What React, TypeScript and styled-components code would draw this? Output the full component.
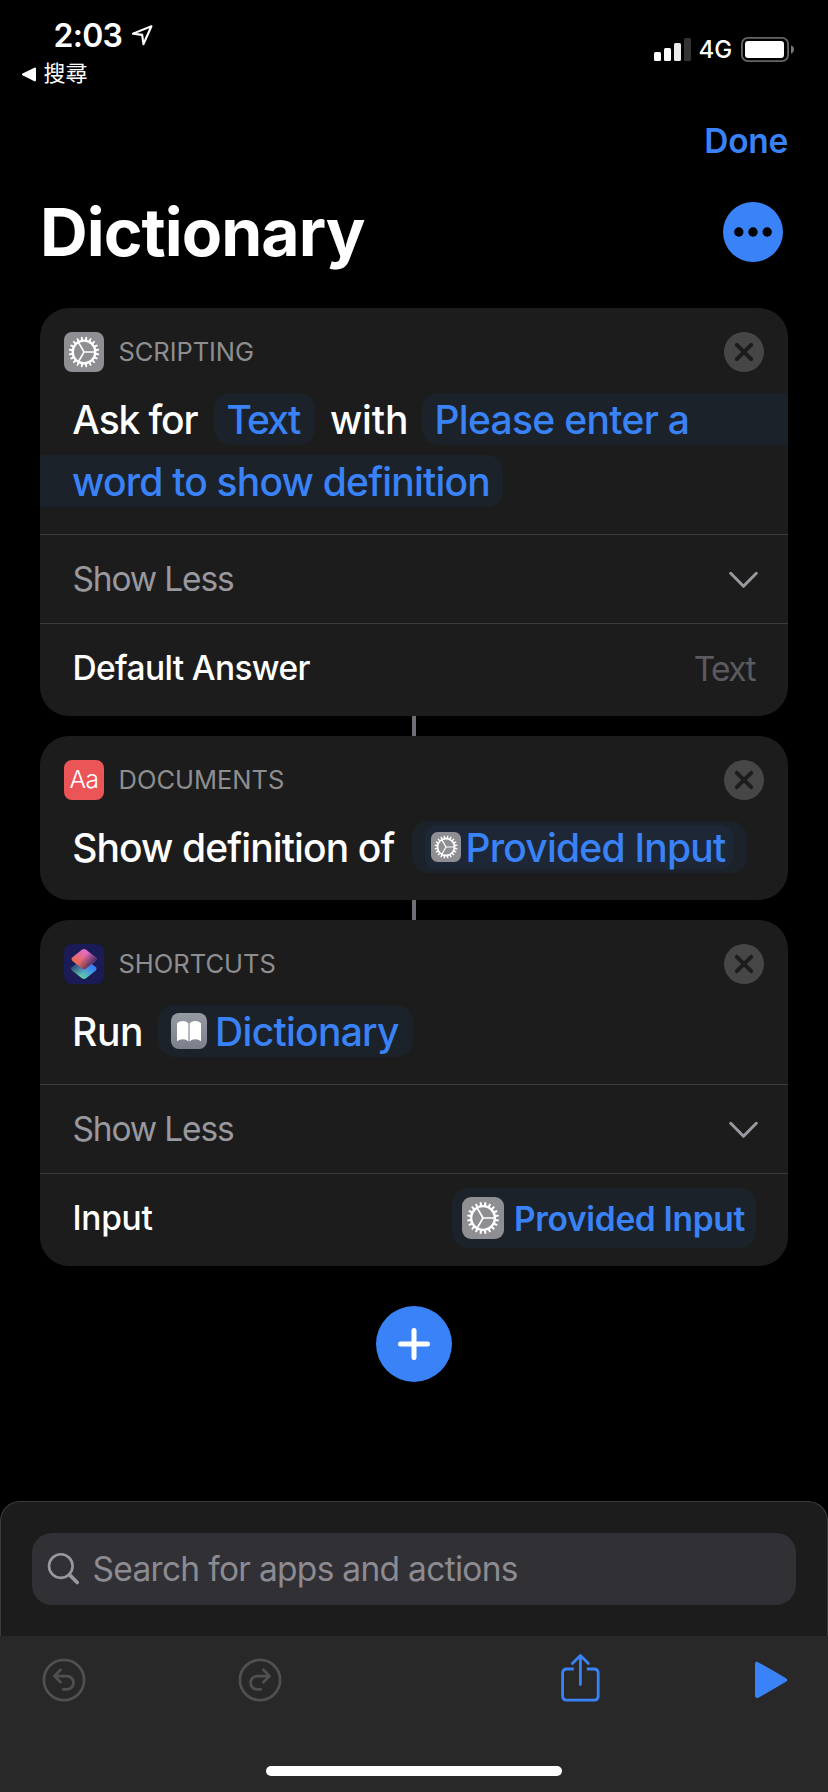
import React from "react";
import styled, { createGlobalStyle } from "styled-components";

const GlobalStyle = createGlobalStyle`
  *, *::before, *::after { box-sizing: border-box; }
  body { margin: 0; background: #000; }
  svg { display: block; flex: none; }
`;

const blue = "#3a82f7";
const gray = "#98989f";

const Screen = styled.div`
  width: 828px;
  height: 1792px;
  display: flex;
  flex-direction: column;
  overflow: hidden;
  background: #000;
  color: #fff;
  font-family: Inter, "Noto Sans CJK TC", sans-serif;
`;

interface TextProps {
  $size?: number;
  $weight?: number;
  $tracking?: number;
  $color?: string;
  $before?: number;
  $after?: number;
  $drop?: number;
}

const Label = styled.span<TextProps>`
  flex: none;
  white-space: pre;
  line-height: 1.2;
  font-size: ${(p) => p.$size ?? 39}px;
  font-weight: ${(p) => p.$weight ?? 500};
  letter-spacing: ${(p) => p.$tracking ?? 0}px;
  color: ${(p) => p.$color ?? "inherit"};
  margin-left: ${(p) => p.$before ?? 0}px;
  margin-right: ${(p) => p.$after ?? 0}px;
  padding-top: ${(p) => (p.$drop ?? 0) * 2}px;
`;

/* Status bar */

const StatusBar = styled.header`
  height: 96px;
  flex: none;
  display: flex;
  justify-content: space-between;
`;

const StatusLeft = styled.div`
  display: flex;
  flex-direction: column;
`;

const TimeRow = styled.div`
  height: 47px;
  margin-top: 12px;
  padding-left: 53.5px;
  display: flex;
  align-items: center;
  gap: 8.5px;
`;

const BackRow = styled.div`
  height: 30px;
  padding-left: 22px;
  display: flex;
  align-items: center;
  gap: 7.5px;
`;

const BackLabel = styled.span`
  font-size: 22px;
  font-weight: 400;
  line-height: 30px;
  padding-bottom: 3px;
`;

const StatusRight = styled.div`
  height: 99px;
  padding-right: 34px;
  display: flex;
  align-items: center;
`;

/* Navigation */

const NavBar = styled.nav`
  height: 88px;
  flex: none;
  padding-right: 40px;
  display: flex;
  align-items: center;
  justify-content: flex-end;
`;

const TitleRow = styled.div`
  height: 60px;
  margin: 18px 45px 46px 40px;
  flex: none;
  display: flex;
  align-items: center;
  justify-content: space-between;
`;

const Title = styled.h1`
  margin: 0;
  padding-top: 2px;
  font-size: 66px;
  font-weight: 700;
  line-height: 1.2;
  letter-spacing: -0.95px;
`;

const RoundButton = styled.button<{ $size: number; $bg: string }>`
  width: ${(p) => p.$size}px;
  height: ${(p) => p.$size}px;
  flex: none;
  padding: 0;
  border: 0;
  border-radius: 50%;
  background: ${(p) => p.$bg};
  display: flex;
  align-items: center;
  justify-content: center;
`;

/* Action cards */

const Flow = styled.main`
  display: flex;
  flex-direction: column;
  align-items: center;
`;

const Card = styled.section`
  width: 748px;
  border-radius: 29px;
  background: #1c1c1c;
  overflow: hidden;
`;

const Connector = styled.div`
  width: 4px;
  height: 20px;
  background: #6e7077;
`;

const CardHeader = styled.div`
  height: 40px;
  margin: 24px 24px 21px;
  display: flex;
  align-items: center;
  gap: 14.5px;
`;

const AppTile = styled.span<{ $size: number; $radius: number; $bg: string }>`
  width: ${(p) => p.$size}px;
  height: ${(p) => p.$size}px;
  flex: none;
  border-radius: ${(p) => p.$radius}px;
  background: ${(p) => p.$bg};
  display: flex;
  align-items: center;
  justify-content: center;
  overflow: hidden;
`;

const Category = styled.span<{ $tracking: number }>`
  flex: 1;
  font-size: 25.5px;
  line-height: 1;
  letter-spacing: ${(p) => p.$tracking}px;
  color: #8e8e90;
`;

const Sentence = styled.div`
  display: flex;
  flex-direction: column;
  gap: 10px;
  margin-bottom: 27px;
`;

const SentenceLine = styled.div<{ $inset?: number }>`
  height: 52px;
  padding-left: ${(p) => p.$inset ?? 0}px;
  display: flex;
  align-items: center;
`;

const Pill = styled.span<{ $pad: string; $after?: number; $open?: "left" | "right"; $height?: number }>`
  height: ${(p) => p.$height ?? 52}px;
  flex: ${(p) => (p.$open === "right" ? "1 0 auto" : "none")};
  padding: ${(p) => p.$pad};
  margin-right: ${(p) => p.$after ?? 0}px;
  border-radius: ${(p) => (p.$open === "left" ? "0 16px 16px 0" : p.$open === "right" ? "16px 0 0 16px" : "16px")};
  background: #1c2229;
  color: ${blue};
  display: flex;
  align-items: center;
`;

const Variable = styled.span`
  height: 44px;
  padding: 0 7.4px 0 6px;
  border-radius: 12px;
  background: #1e2735;
  display: flex;
  align-items: center;
`;

const Row = styled.div<{ $height: number; $right: number; $lift?: number }>`
  height: ${(p) => p.$height}px;
  padding: 0 ${(p) => p.$right}px ${(p) => p.$lift ?? 0}px 32.5px;
  border-top: 1px solid #3b3b3c;
  display: flex;
  align-items: center;
  justify-content: space-between;
`;

const AddRow = styled.div`
  margin-top: 40px;
  display: flex;
  justify-content: center;
`;

/* Bottom sheet */

const Sheet = styled.section`
  height: 135px;
  margin-top: auto;
  flex: none;
  padding: 31px 31px 0;
  border: 1px solid #3c3c3d;
  border-bottom: 0;
  border-radius: 20px 20px 0 0;
  background: #1c1c1c;
`;

const SearchField = styled.div`
  height: 72px;
  padding-left: 15px;
  border-radius: 20px;
  background: #313035;
  display: flex;
  align-items: center;
`;

const Toolbar = styled.footer`
  height: 156px;
  flex: none;
  background: #282828;
  display: flex;
  flex-direction: column;
  align-items: center;
`;

const ToolbarItems = styled.div`
  width: 100%;
  height: 88px;
  padding: 0 40px 0 42px;
  display: flex;
  align-items: center;
`;

const Spacer = styled.span<{ $grow: number }>`
  flex: ${(p) => p.$grow} 0 0;
`;

const HomeIndicator = styled.div`
  width: 296px;
  height: 10px;
  margin-top: 42px;
  border-radius: 5px;
  background: #fff;
`;

/* Icons */

const TEETH = Array.from({ length: 20 }, (_, i) => i * 18 + 9);

const Gear = ({ size }: { size: number }) => (
  <svg width={size} height={size} viewBox="-20 -20 40 40" stroke="#fff" fill="none">
    <circle r="11.3" strokeWidth="2.3" />
    {TEETH.map((a) => (
      <path key={a} d="M11.8 -1.15 15.2 -.8V.8L11.8 1.15Z" fill="#fff" stroke="none" transform={`rotate(${a})`} />
    ))}
    {[0, 120, 240].map((a) => (
      <path key={a} d="M0 0H11" strokeWidth="1.6" transform={`rotate(${a})`} />
    ))}
  </svg>
);

const ScriptingTile = ({ size, radius }: { size: number; radius: number }) => (
  <AppTile $size={size} $radius={radius} $bg="#8e8e93">
    <Gear size={size} />
  </AppTile>
);

const DocumentsTile = () => (
  <AppTile $size={40} $radius={8} $bg="#eb5558">
    <Label $size={24.5} $weight={300} $tracking={-0.6}>Aa</Label>
  </AppTile>
);

const ShortcutsTile = () => (
  <AppTile $size={40} $radius={8} $bg="#1b1b56">
    <svg width="40" height="40" viewBox="0 0 40 40">
      <defs>
        <linearGradient id="top" x1="0.6" y1="0.1" x2="0.25" y2="0.6">
          <stop offset="0" stopColor="#e46ccf" />
          <stop offset="1" stopColor="#ea6a5c" />
        </linearGradient>
        <linearGradient id="topFade" x1="0.5" y1="0.35" x2="0.92" y2="0.62">
          <stop offset="0" stopColor="#3f2b66" stopOpacity="0" />
          <stop offset="1" stopColor="#3f2b66" stopOpacity="0.95" />
        </linearGradient>
        <linearGradient id="bottom" x1="0.4" y1="0.95" x2="0.8" y2="0.45">
          <stop offset="0" stopColor="#66cfa0" />
          <stop offset="1" stopColor="#3a83f5" />
        </linearGradient>
        <linearGradient id="bottomFade" x1="0.5" y1="0.65" x2="0.1" y2="0.35">
          <stop offset="0" stopColor="#2b4070" stopOpacity="0" />
          <stop offset="1" stopColor="#2b4070" stopOpacity="0.85" />
        </linearGradient>
      </defs>
      {["bottom", "bottomFade"].map((id) => (
        <path key={id} fill={`url(#${id})`} d="M17.9 15.6Q20 14 22.1 15.6L31.8 23.3Q33.4 24.9 31.8 26.5L22.1 34.2Q20 35.8 17.9 34.2L8.2 26.5Q6.6 24.9 8.2 23.3Z" />
      ))}
      {["top", "topFade"].map((id) => (
        <path key={id} fill={`url(#${id})`} d="M17.9 5.8Q20 4.2 22.1 5.8L31.8 13.5Q33.4 15.1 31.8 16.7L22.1 24.4Q20 26 17.9 24.4L8.2 16.7Q6.6 15.1 8.2 13.5Z" />
      ))}
    </svg>
  </AppTile>
);

const BookTile = () => (
  <AppTile $size={36} $radius={8} $bg="linear-gradient(#959aa3, #7b808b)">
    <svg width="36" height="36" viewBox="0 0 36 36" fill="#fff">
      <path d="M6 10.2Q8.5 8 11.8 8Q15.8 8 17.4 10.6V28.4Q15.5 26.3 11.8 26.3Q8.5 26.3 6 28.2Z" />
      <path d="M30 10.2Q27.5 8 24.2 8Q20.2 8 18.6 10.6V28.4Q20.5 26.3 24.2 26.3Q27.5 26.3 30 28.2Z" />
    </svg>
  </AppTile>
);

const RemoveButton = () => (
  <RoundButton $size={40} $bg="#464646" aria-label="Remove">
    <svg width="40" height="40" stroke="#1c1c1c" strokeWidth="4" strokeLinecap="round">
      <path d="M12.8 12.8 27.2 27.2M27.2 12.8 12.8 27.2" />
    </svg>
  </RoundButton>
);

const Chevron = () => (
  <svg width="29" height="20" viewBox="0 0 29 20" fill="none" stroke={gray} strokeWidth="3" strokeLinecap="round" strokeLinejoin="round">
    <path d="M1.7 4.3 14.5 17.3 27.3 4.3" />
  </svg>
);

const HistoryIcon = ({ flip }: { flip?: boolean }) => (
  <svg width="44" height="44" viewBox="-22 -22 44 44" fill="none" stroke="#505050" strokeWidth="2.7" strokeLinecap="round" strokeLinejoin="round">
    <circle r="20.1" />
    <path transform={flip ? "scale(-1 1)" : undefined} d="M-3.4 -10.2 -9.6 -3.9 -3.4 2.2M-9.2 -3.9H2.8A6.5 6.5 0 0 1 2.8 9.4H-.8" />
  </svg>
);

const CardTop = ({ tile, name, tracking }: { tile: React.ReactNode; name: string; tracking: number }) => (
  <CardHeader>
    {tile}
    <Category $tracking={tracking}>{name}</Category>
    <RemoveButton />
  </CardHeader>
);

const ShowLessRow = () => (
  <Row $height={89} $right={30}>
    <Label $size={33.5} $weight={400} $tracking={-1.16} $color={gray}>Show Less</Label>
    <Chevron />
  </Row>
);

export default function App() {
  return (
    <Screen>
      <GlobalStyle />
      <StatusBar>
        <StatusLeft>
          <TimeRow>
            <Label $size={32} $weight={600} $tracking={-0.75} $drop={1}>2:03</Label>
            <svg width="23" height="23" viewBox="0 0 23 23" fill="none" stroke="#fff" strokeWidth="2.1" strokeLinejoin="round">
              <path d="M20.4 2.2 2 9.6 11.2 10.9 12.4 20.2Z" />
            </svg>
          </TimeRow>
          <BackRow>
            <svg width="14" height="15" viewBox="0 0 14 15" fill="#fff">
              <path d="M.5 6.6 12.4 .7Q14 .2 14 1.8V13.2Q14 14.8 12.4 14.2L.5 8.3Q-.6 7.4.5 6.6Z" />
            </svg>
            <BackLabel>搜尋</BackLabel>
          </BackRow>
        </StatusLeft>
        <StatusRight>
          <svg width="37" height="23" viewBox="0 0 37 23" fill="#fff">
            <rect y="14" width="7" height="9" rx="1.5" />
            <rect x="10" y="10" width="7" height="13" rx="1.5" />
            <rect x="20" y="5" width="7" height="18" rx="1.5" fill="#ebebeb" />
            <rect x="30" width="7" height="23" rx="1.5" fill="#333" />
          </svg>
          <Label $size={24} $weight={450} $tracking={-0.1} $drop={1} $before={8} $after={9}>4G</Label>
          <svg width="53" height="25" viewBox="0 0 53 25">
            <rect x="0.9" y="0.9" width="46.2" height="23.2" rx="6" fill="none" stroke="#666" strokeWidth="1.8" />
            <rect x="4" y="4" width="39" height="17" rx="3.2" fill="#fff" />
            <path d="M50 8.3Q53 9.6 53 12.5T50 16.7Z" fill="#777" />
          </svg>
        </StatusRight>
      </StatusBar>

      <NavBar>
        <Label $size={33.5} $weight={560} $tracking={-0.3} $color={blue} $drop={1}>Done</Label>
      </NavBar>

      <TitleRow>
        <Title>Dictionary</Title>
        <RoundButton $size={60} $bg={blue} aria-label="More">
          <svg width="60" height="60">
            <circle cx="15.8" cy="30" r="4.7" />
            <circle cx="30" cy="30" r="4.7" />
            <circle cx="44.2" cy="30" r="4.7" />
          </svg>
        </RoundButton>
      </TitleRow>

      <Flow>
        <Card>
          <CardTop tile={<ScriptingTile size={40} radius={8} />} name="SCRIPTING" tracking={-0.07} />
          <Sentence>
            <SentenceLine $inset={32.3}>
              <Label $tracking={-1.15} $drop={1} $after={16.6}>Ask for</Label>
              <Pill $pad="0 16px 0 12.5px" $after={14.5}>
                <Label $tracking={-1.8} $drop={1}>Text</Label>
              </Pill>
              <Label $tracking={-0.16} $drop={1} $after={13.7}>with</Label>
              <Pill $pad="0 0 0 12.5px" $open="right">
                <Label $tracking={-0.68} $drop={1}>Please enter a</Label>
              </Pill>
            </SentenceLine>
            <SentenceLine>
              <Pill $pad="0 13px 0 32px" $open="left">
                <Label $tracking={-0.79} $drop={1}>word to show definition</Label>
              </Pill>
            </SentenceLine>
          </Sentence>
          <ShowLessRow />
          <Row $height={93} $right={33} $lift={4}>
            <Label $size={33.5} $tracking={-0.64}>Default Answer</Label>
            <Label $size={33.5} $weight={400} $tracking={-1.58} $color="#5a5a5f" $drop={1}>Text</Label>
          </Row>
        </Card>
        <Connector />
        <Card>
          <CardTop tile={<DocumentsTile />} name="DOCUMENTS" tracking={0} />
          <Sentence>
            <SentenceLine $inset={32.2}>
              <Label $tracking={-0.89} $drop={1} $after={17.2}>Show definition of</Label>
              <Pill $pad="0 14px 0 13px">
                <Variable>
                  <ScriptingTile size={30} radius={6.5} />
                  <Label $tracking={-0.79} $drop={1} $before={5}>Provided Input</Label>
                </Variable>
              </Pill>
            </SentenceLine>
          </Sentence>
        </Card>
        <Connector />
        <Card>
          <CardTop tile={<ShortcutsTile />} name="SHORTCUTS" tracking={0} />
          <Sentence>
            <SentenceLine $inset={32}>
              <Label $tracking={-0.37} $drop={1} $after={15}>Run</Label>
              <Pill $pad="0 14.3px 0 13px">
                <BookTile />
                <Label $tracking={-0.72} $drop={1} $before={8}>Dictionary</Label>
              </Pill>
            </SentenceLine>
          </Sentence>
          <ShowLessRow />
          <Row $height={93} $right={32} $lift={4}>
            <Label $size={33.5} $tracking={-0.29}>Input</Label>
            <Pill $pad="0 11px 0 10px" $height={60}>
              <ScriptingTile size={42} radius={9} />
              <Label $size={33.5} $weight={600} $tracking={-0.32} $drop={1} $before={10}>Provided Input</Label>
            </Pill>
          </Row>
        </Card>
      </Flow>

      <AddRow>
        <RoundButton $size={76} $bg={blue} aria-label="Add action">
          <svg width="76" height="76" stroke="#fff" strokeWidth="5" strokeLinecap="round">
            <path d="M24.5 38H51.5M38 24.5V51.5" />
          </svg>
        </RoundButton>
      </AddRow>

      <Sheet>
        <SearchField>
          <svg width="33" height="33" viewBox="0 0 33 33" fill="none" stroke={gray} strokeLinecap="round">
            <circle cx="13.8" cy="13.1" r="11.8" strokeWidth="2.6" />
            <path d="M22.6 21.9 30.2 29.5" strokeWidth="3.7" />
          </svg>
          <Label $size={33.5} $weight={400} $tracking={-0.7} $color="#8c8b92" $before={12.5}>Search for apps and actions</Label>
        </SearchField>
      </Sheet>

      <Toolbar>
        <ToolbarItems>
          <HistoryIcon />
          <Spacer $grow={151} />
          <HistoryIcon flip />
          <Spacer $grow={278} />
          <svg width="40" height="54" viewBox="0 0 40 54" fill="none" stroke={blue} strokeWidth="2.8" strokeLinecap="round" strokeLinejoin="round">
            <path d="M13.8 16H6.8Q2.6 16 2.6 20.2V43Q2.6 47.2 6.8 47.2H34Q38.2 47.2 38.2 43V20.2Q38.2 16 34 16H26.8" strokeLinecap="butt" />
            <path d="M20.4 31.5V2.8M12.4 10.4 20.4 2.4 28.4 10.4" />
          </svg>
          <Spacer $grow={154} />
          <svg width="33" height="38" viewBox="0 0 33 38" fill={blue}>
            <path d="M0 3Q0 0 2.6 .9Q3 1 31 17.2Q33.6 19 31 20.8L3.4 36.8Q0 38 0 34.6Z" />
          </svg>
        </ToolbarItems>
        <HomeIndicator />
      </Toolbar>
    </Screen>
  );
}
